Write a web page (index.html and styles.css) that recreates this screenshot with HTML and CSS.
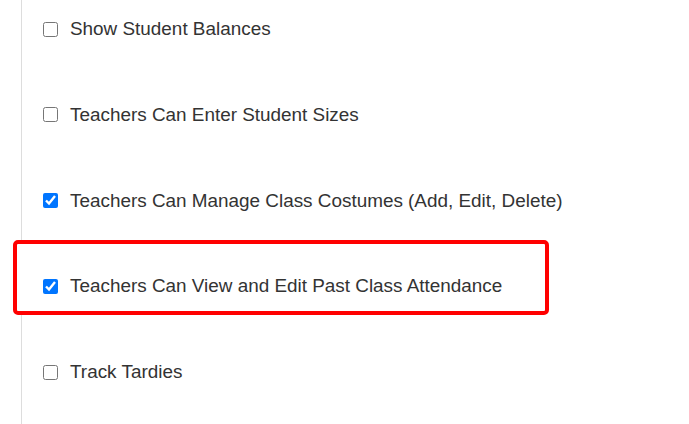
FILE: index.html
```html
<!DOCTYPE html>
<html lang="en">
<head>
    <meta charset="UTF-8">
    <meta name="viewport" content="width=device-width, initial-scale=1.0">
    <title>Teacher Settings</title>
    <link rel="stylesheet" href="styles.css">
</head>
<body>

    <div class="settings">
        <label class="option">
            <input type="checkbox">
            <span>Show Student Balances</span>
        </label>
        <label class="option">
            <input type="checkbox">
            <span>Teachers Can Enter Student Sizes</span>
        </label>
        <label class="option">
            <input type="checkbox" checked>
            <span>Teachers Can Manage Class Costumes (Add, Edit, Delete)</span>
        </label>
        <!-- highlighted option -->
        <label class="option highlight">
            <input type="checkbox" checked>
            <span>Teachers Can View and Edit Past Class Attendance</span>
        </label>
        <label class="option">
            <input type="checkbox">
            <span>Track Tardies</span>
        </label>
    </div>

</body>
</html>
```

FILE: styles.css
```css
body {
    margin: 0;
    font-family: "Liberation Sans", Arial, sans-serif;
    background: #fff;
    color: #333;
    overflow: hidden;
}
.settings {
    margin-left: 21px;
    border-left: 1px solid #ddd;
    height: 424px;
    padding: 18px 0 0 18px;
    display: flex;
    flex-direction: column;
    gap: 63.75px;
}
.option {
    display: flex;
    align-items: center;
    height: 22px;
    font-size: 18.9px;
}
.option input {
    margin: 0 12px 0 3px;
    width: 15px;
    height: 15px;
}
.highlight {
    margin: -35px 0 -18px -27px;
    width: 536px;
    box-sizing: border-box;
    padding: 31px 0 14px 23px;
    height: 75px;
    border: 4px solid #f00;
    border-radius: 5px;
    background: #fff;
}
```
